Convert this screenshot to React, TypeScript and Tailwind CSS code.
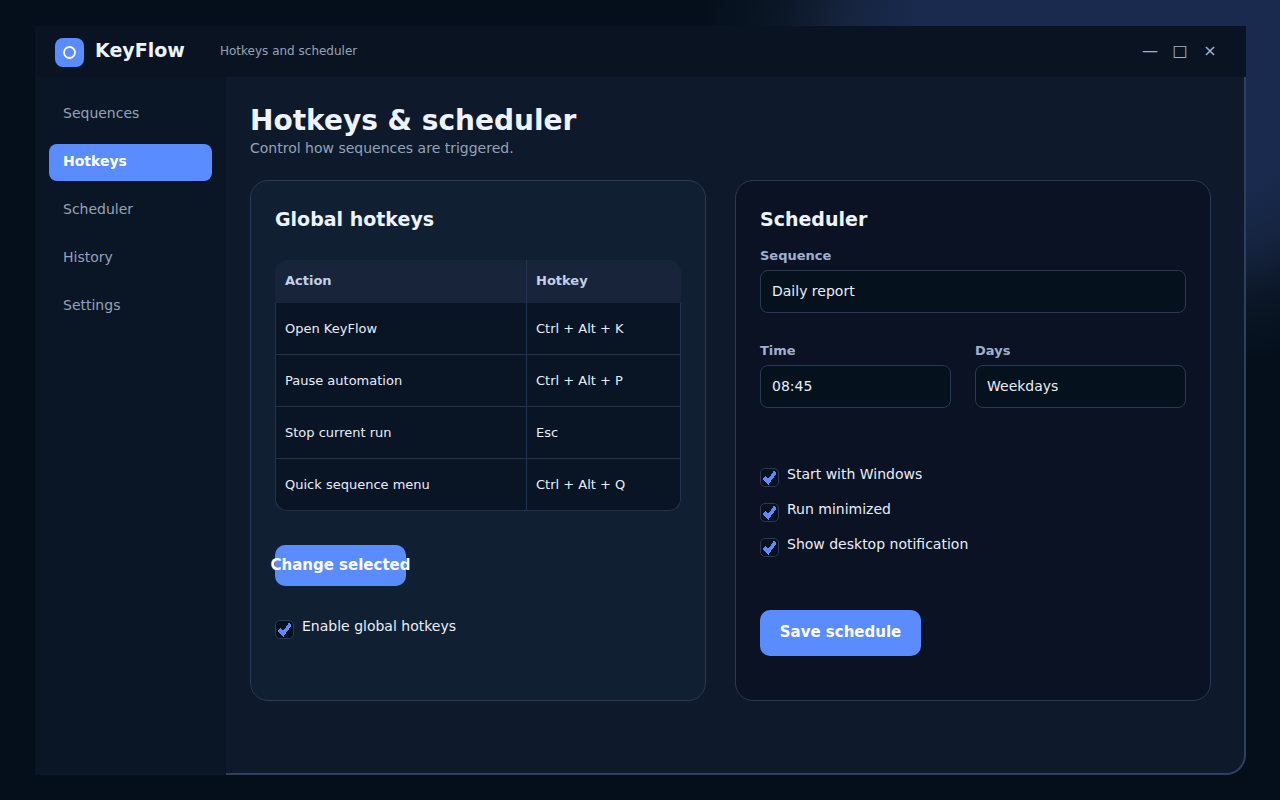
import { useState } from "react";

const navItems = ["Sequences", "Hotkeys", "Scheduler", "History", "Settings"];

const hotkeys = [
    { action: "Open KeyFlow", keys: "Ctrl + Alt + K" },
    { action: "Pause automation", keys: "Ctrl + Alt + P" },
    { action: "Stop current run", keys: "Esc" },
    { action: "Quick sequence menu", keys: "Ctrl + Alt + Q" },
];

export default function App() {
    return (
        <div className="flex min-h-screen flex-col bg-[#050f1c] bg-[radial-gradient(430px_325px_at_1130px_50px,#192a4e_0%,#192a4e_50%,#16243f_66%,#0b1726_82%,#050f1c_100%)] pt-[26px] pr-[34px] pb-[25px] pl-[35px] font-['DejaVu_Sans',sans-serif] text-[#eef4ff]">
            <div className="flex flex-1 flex-col">
                <TitleBar />
                <div className="flex flex-1">
                    <Sidebar />
                    <main className="flex-1 rounded-br-[20px] border-r-2 border-b-2 border-[#2f3f5e] bg-[#0e1a2b] pt-[25px] pr-[33px] pb-[72px] pl-6">
                        <h1 className="text-[28px] leading-[38px] font-bold">Hotkeys &amp; scheduler</h1>
                        <p className="text-sm leading-4 text-[#94a3b8]">
                            Control how sequences are triggered.
                        </p>
                        <div className="mt-6 grid grid-cols-[456fr_476fr] gap-[29px]">
                            <HotkeysCard />
                            <SchedulerCard />
                        </div>
                    </main>
                </div>
            </div>
        </div>
    );
}

function TitleBar() {
    return (
        <header className="flex h-[51px] items-start bg-[#0a1322] pt-3 pr-[21px] pl-5">
            <svg className="h-[29px] w-[29px]" viewBox="0 0 29 29" aria-hidden="true">
                <rect width="29" height="29" rx="8" fill="#5b8cff" />
                <circle cx="14.5" cy="14.5" r="5.5" fill="none" stroke="#fff" strokeWidth="1.8" />
            </svg>
            <span className="ml-[11px] w-[125px] text-[19px] leading-6 font-bold">KeyFlow</span>
            <span className="text-xs leading-[26px] text-[#94a3b8]">Hotkeys and scheduler</span>
            <div className="ml-auto flex text-base leading-[26px] text-[#9fb0d0]">
                <button type="button" aria-label="Minimize" className="w-[30px]">—</button>
                <button type="button" aria-label="Maximize" className="w-[30px]">□</button>
                <button type="button" aria-label="Close" className="w-[30px]">×</button>
            </div>
        </header>
    );
}

function Sidebar() {
    return (
        <nav className="flex w-[191px] flex-col gap-[11px] bg-[#0a1525] px-3.5 pt-[19px]">
            {navItems.map((item) => (
                <a
                    key={item}
                    href="#"
                    className={`h-[37px] rounded-lg px-3.5 text-sm leading-[34px] ${
                        item === "Hotkeys" ? "bg-[#5b8cff] font-bold text-white" : "text-[#94a3b8]"
                    }`}
                >
                    {item}
                </a>
            ))}
        </nav>
    );
}

function HotkeysCard() {
    return (
        <section className="rounded-[18px] border border-[#2a3957] bg-[#111f33] px-6 pt-[26px] pb-11">
            <h2 className="text-[19px] leading-6 font-bold">Global hotkeys</h2>
            <table className="mt-[29px] w-full table-fixed border-separate border-spacing-0 text-left text-[13px]">
                <thead>
                    <tr className="h-[43px] text-[#c3d0ea]">
                        <th className="w-[251px] rounded-tl-xl bg-[#17243a] px-2.5 pb-0.5 font-bold">Action</th>
                        <th className="rounded-tr-xl border-l border-[#23324f] bg-[#17243a] px-[9px] pb-0.5 font-bold">
                            Hotkey
                        </th>
                    </tr>
                </thead>
                <tbody className="text-[#e8eefa]">
                    {hotkeys.map((row) => (
                        <tr key={row.action} className="group h-[52px]">
                            <td className="border-b border-l border-[#23324f] bg-[#091425] px-[9px] group-last:rounded-bl-xl">
                                {row.action}
                            </td>
                            <td className="border-x border-b border-[#23324f] bg-[#091425] px-[9px] group-last:rounded-br-xl">
                                {row.keys}
                            </td>
                        </tr>
                    ))}
                </tbody>
            </table>
            <button
                type="button"
                className="mt-[34px] flex h-[41px] w-[131px] items-center justify-center rounded-[10px] bg-[#5b8cff] text-[15px] font-bold whitespace-nowrap text-white"
            >
                Change selected
            </button>
            <div className="mt-[30px]">
                <Checkbox label="Enable global hotkeys" />
            </div>
        </section>
    );
}

function SchedulerCard() {
    return (
        <section className="rounded-[18px] border border-[#2a3957] bg-[#0a1224] px-6 pt-[26px] pb-11">
            <h2 className="text-[19px] leading-6 font-bold">Scheduler</h2>
            <div className="mt-3.5">
                <Field id="sequence" label="Sequence" value="Daily report" />
            </div>
            <div className="mt-[27px] grid grid-cols-[191fr_211fr] gap-6">
                <Field id="time" label="Time" value="08:45" />
                <Field id="days" label="Days" value="Weekdays" />
            </div>
            <div className="mt-14 flex flex-col gap-3">
                <Checkbox label="Start with Windows" />
                <Checkbox label="Run minimized" />
                <Checkbox label="Show desktop notification" />
            </div>
            <button
                type="button"
                className="mt-[53px] flex h-[46px] w-[161px] items-center justify-center rounded-[10px] bg-[#5b8cff] pb-0.5 text-[15px] font-bold text-white"
            >
                Save schedule
            </button>
        </section>
    );
}

function Field({ id, label, value }: { id: string; label: string; value: string }) {
    return (
        <div className="min-w-0">
            <label htmlFor={id} className="block text-[13px] leading-[22px] font-bold text-[#9fb0d0]">
                {label}
            </label>
            <input
                id={id}
                type="text"
                defaultValue={value}
                className="mt-[3px] block h-[43px] w-full rounded-lg border border-[#2a3957] bg-[#05111d] px-[11px] pb-0.5 text-sm text-[#e8eefa] outline-none focus:border-[#5b8cff]"
            />
        </div>
    );
}

function Checkbox({ label }: { label: string }) {
    const [checked, setChecked] = useState(true);

    return (
        <label className="flex h-[23px] items-start gap-2 text-sm leading-5 text-[#e8eefa]">
            <span className="mt-1 grid h-[19px] w-[19px]">
                <input
                    type="checkbox"
                    checked={checked}
                    onChange={(e) => setChecked(e.target.checked)}
                    className="col-start-1 row-start-1 h-[19px] w-[19px] appearance-none rounded-[5px] border border-[#2a3957] bg-[#05111d]"
                />
                {checked && (
                    <svg
                        className="pointer-events-none z-10 col-start-1 row-start-1 h-[19px] w-[19px]"
                        viewBox="0 0 19 19"
                        fill="none"
                        stroke="#5b8cff"
                        strokeWidth="3.6"
                        shapeRendering="crispEdges"
                        aria-hidden="true"
                    >
                        <path d="M4 9.5 8.3 13.8 15.3 4" />
                    </svg>
                )}
            </span>
            {label}
        </label>
    );
}
